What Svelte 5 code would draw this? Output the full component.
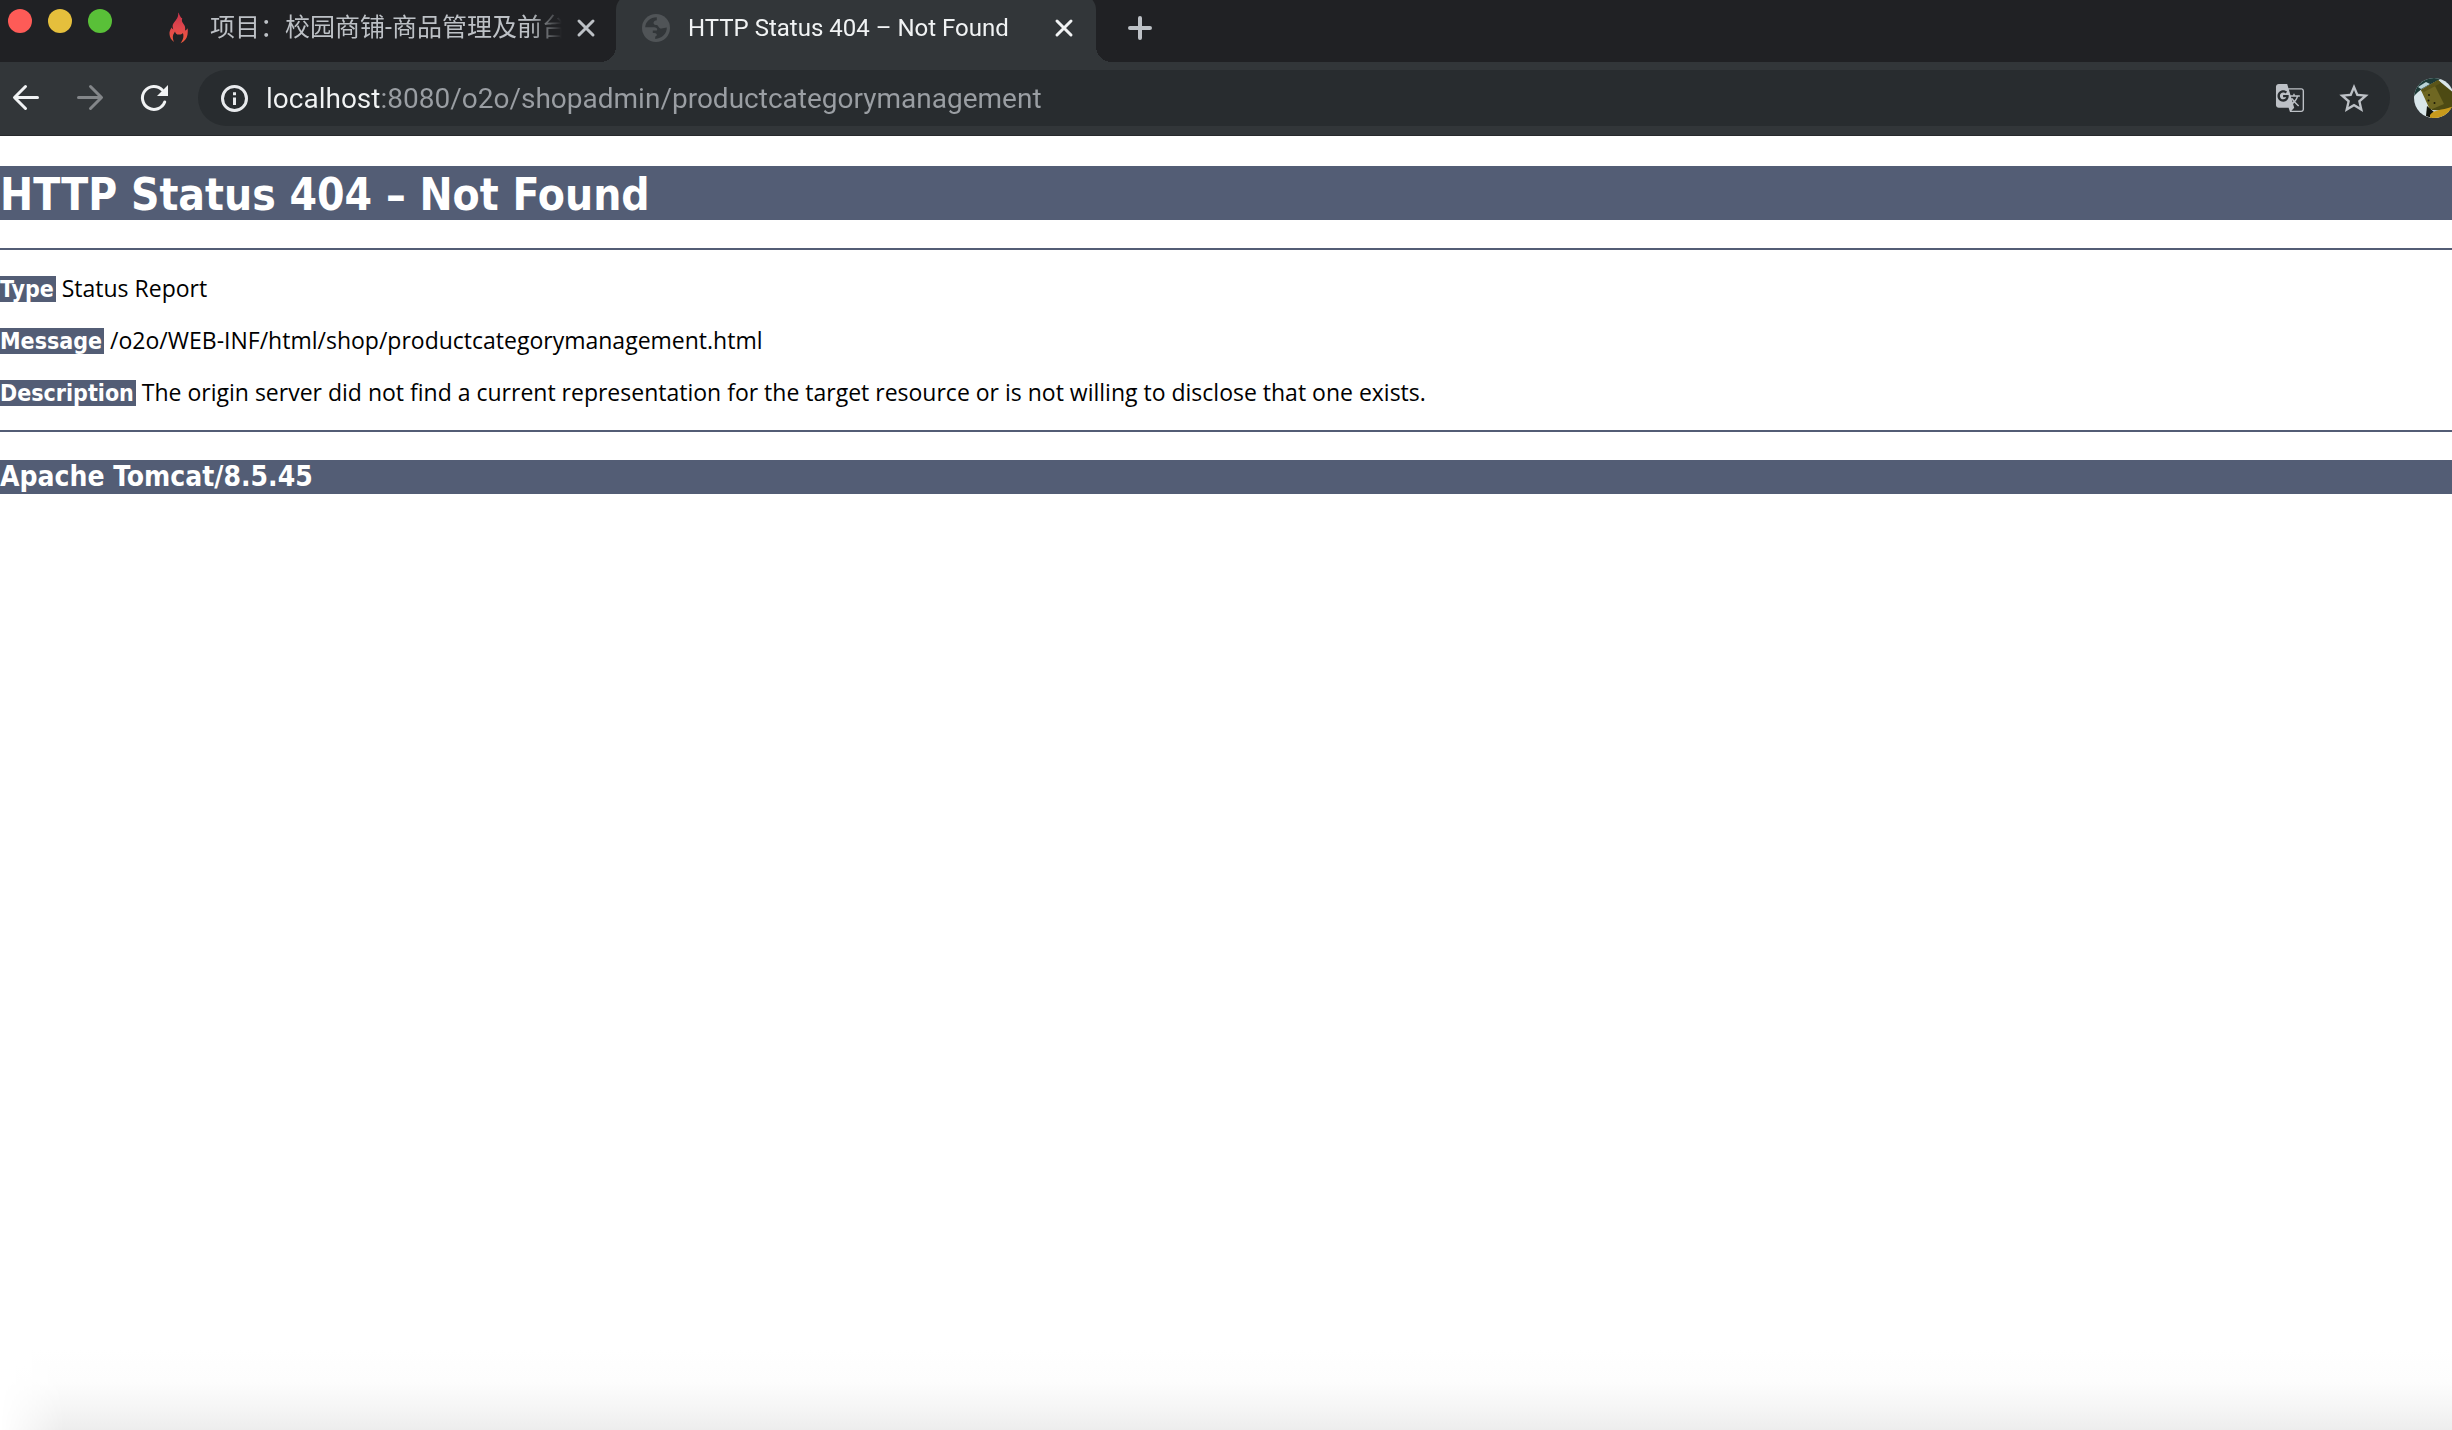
<script lang="ts">
	// Browser window showing Tomcat's default 404 report

	interface Tab {
		id: string;
		title: string;
		icon: 'flame' | 'globe';
		active: boolean;
	}

	interface ReportLine {
		label: string;
		value: string;
	}

	const tabs: Tab[] = [
		{ id: 'course', title: '项目：校园商铺-商品管理及前台', icon: 'flame', active: false },
		{ id: 'report', title: 'HTTP Status 404 – Not Found', icon: 'globe', active: true }
	];

	const lines: ReportLine[] = [
		{ label: 'Type', value: 'Status Report' },
		{ label: 'Message', value: '/o2o/WEB-INF/html/shop/productcategorymanagement.html' },
		{
			label: 'Description',
			value:
				'The origin server did not find a current representation for the target resource or is not willing to disclose that one exists.'
		}
	];

	let url = $state('localhost:8080/o2o/shopadmin/productcategorymanagement');
</script>

<div class="window">
	<header class="chrome">
		<div class="tab-strip">
			<div class="window-controls">
				<button type="button" class="light close-window" aria-label="Close window"></button>
				<button type="button" class="light minimize" aria-label="Minimize"></button>
				<button type="button" class="light zoom" aria-label="Zoom"></button>
			</div>

			{#each tabs as tab (tab.id)}
				<div class="tab" class:active={tab.active}>
					{#if tab.icon === 'flame'}
						<svg class="favicon" viewBox="0 0 32 32" aria-hidden="true">
							<defs>
								<linearGradient id="flame" x1="0" y1="0" x2="0" y2="1">
									<stop offset="0" stop-color="#c9344b" />
									<stop offset="0.5" stop-color="#e0474c" />
									<stop offset="1" stop-color="#ee5a3c" />
								</linearGradient>
							</defs>
							<path
								fill="url(#flame)"
								d="M16 .6c.6 2.600 0 5-2.200 7.600-2 2.400-3.400 4.200-3.200 6.400.1 1.200.5 2 .7 3-.8-.4-1.300-1.200-1.500-2.200-1.700 2-2.500 4.200-2.300 6.600.2 3 1.600 6 4.600 8-1.300-2.600-1.700-5.200-.8-7.600.5-1.200 1.200-2 1.700-3 .4 2 1.700 3 3.600 3.200 1.900.1 3.400-.3 4.300-1.500.7 2 .7 4.200-.1 6.200-.5 1.400-1.300 2.700-2.300 4 4-1.800 6.300-4.800 7-8.600.4-2.400.4-4.600.1-6.400-.7 1.200-1.500 1.900-2.600 2.200.5-2.600 0-4.400-1.300-6.200-1.500-2-2.300-3.400-1.500-6C18.300 6.100 17.900 2.600 16 .6z"
							/>
						</svg>
					{:else}
						<svg class="favicon" viewBox="0 0 32 32" aria-hidden="true">
							<circle cx="16" cy="16" r="14" fill="#505457" />
							<path
								fill="#323639"
								d="M5.200 15.200C5.600 9.800 10 5.400 16.800 5.300V8.200c-1.800.2-3.300 1.200-3.300 2.800 0 1.800 2 2 3.200 2.100 1.700.1 1.500 2.700 3.600 3.300 2.300.6 4-.6 6.500-.8C27 21.600 22 26.800 15.200 26.900v-2.500c1.200-.4 1.700-1 1.600-2-.1-1.400-2-1.500-4-1.500v-2.300h3.800c.8 0 .8-1.700.1-2.400-.8-.8-2-.9-3.500-.9z"
							/>
						</svg>
					{/if}
					<span class="title">{tab.title}</span>
					<button type="button" class="icon-button" aria-label="Close tab">
						<svg viewBox="0 0 32 32" aria-hidden="true">
							<path d="M9 9l14 14M23 9L9 23" stroke="currentColor" stroke-width="3" stroke-linecap="round" />
						</svg>
					</button>
				</div>
			{/each}

			<button type="button" class="icon-button new-tab" aria-label="New tab">
				<svg viewBox="0 0 32 32" aria-hidden="true">
					<path d="M16 6v20M6 16h20" stroke="currentColor" stroke-width="4" stroke-linecap="round" />
				</svg>
			</button>
		</div>

		<div class="toolbar">
			<nav class="history" aria-label="History">
				<button type="button" class="nav-button" aria-label="Back">
					<svg viewBox="0 0 40 40" aria-hidden="true">
						<path d="M31.500 19.500H9M19.500 8.500L8.500 19.500l11 11" />
					</svg>
				</button>
				<button type="button" class="nav-button" aria-label="Forward" disabled>
					<svg viewBox="0 0 40 40" aria-hidden="true">
						<path d="M8.500 19.500H31M20.500 8.500l11 11-11 11" />
					</svg>
				</button>
				<button type="button" class="nav-button" aria-label="Reload">
					<svg viewBox="0 0 40 40" aria-hidden="true">
						<path d="M28.300 12A11.500 11.500 0 1 0 30.700 24" />
						<path class="solid" d="M34 7v11H23z" />
					</svg>
				</button>
			</nav>

			<div class="omnibox">
				<button type="button" class="icon-button info" aria-label="View site information">
					<svg viewBox="0 0 32 32" aria-hidden="true">
						<circle cx="16.500" cy="16.500" r="12" fill="none" stroke="currentColor" stroke-width="3" />
						<path d="M15 10.200h3v3h-3zM15 15.500h3v7.500h-3z" fill="currentColor" />
					</svg>
				</button>
				<input class="url" type="text" aria-label="Address" spellcheck="false" bind:value={url} />
				<button type="button" class="icon-button" aria-label="Translate this page">
					<svg viewBox="0.6 0.6 22.8 22.8" aria-hidden="true">
						<path
							fill="currentColor"
							d="M20 5h-9.120L10 2H4c-1.100 0-2 .9-2 2v13c0 1.100.9 2 2 2h7l1 3h8c1.100 0 2-.9 2-2V7c0-1.100-.9-2-2-2zM7.170 14.590c-2.250 0-4.090-1.830-4.090-4.090s1.830-4.090 4.090-4.090c1.040 0 1.990.37 2.740 1.070l.07.06-1.230 1.180-.06-.05c-.29-.27-.78-.59-1.520-.59-1.310 0-2.380 1.090-2.380 2.420s1.070 2.420 2.380 2.420c1.370 0 1.960-.87 2.120-1.460H7.080V9.910h3.950l.01.07c.04.21.05.4.05.61 0 2.350-1.610 4-3.920 4zm6.030-1.710c.33.6.74 1.180 1.190 1.700l-.54.53-.65-2.230zm.77-.76h-.99l-.31-1.040h3.990s-.34 1.310-1.560 2.740c-.52-.62-.89-1.230-1.130-1.700zM21 20c0 .55-.45 1-1 1h-7l2-2-.81-2.770.92-.92L17.790 18l.73-.73-2.710-2.680c.9-1.030 1.600-2.250 1.920-3.510H19v-1.040h-3.640V9h-1.040v1.040h-1.960L11.180 6H20c.55 0 1 .45 1 1v13z"
						/>
					</svg>
				</button>
				<button type="button" class="icon-button" aria-label="Bookmark this page">
					<svg viewBox="1.1 0.6 21.8 21.8" aria-hidden="true">
						<path
							fill="currentColor"
							d="M22 9.240l-7.190-.62L12 2 9.190 8.630 2 9.240l5.460 4.730L5.820 21 12 17.270 18.180 21l-1.630-7.030L22 9.240zM12 15.400l-3.760 2.270 1-4.280-3.320-2.880 4.380-.38L12 6.100l1.710 4.040 4.380.38-3.320 2.880 1 4.280L12 15.400z"
						/>
					</svg>
				</button>
			</div>

			<button type="button" class="avatar" aria-label="Profile">
				<svg viewBox="0 0 40 40" aria-hidden="true">
					<rect width="40" height="40" fill="#d9e6ea" />
					<path d="M0 0h28L8 11 4 14 0 18z" fill="#1d3a37" />
					<path d="M4 9l8-5 4 2-9 5z" fill="#b9d3d6" />
					<path d="M7 12l17-10 16 13v18l-22-1z" fill="#4d4a13" />
					<path d="M7 12l14-4 9 18-14 6z" fill="#6f6722" />
					<path d="M7 12l17-10 3 3-17 9z" fill="#5b5518" />
					<path d="M13 28l7 6-2 6-6-2z" fill="#10130c" />
					<path d="M16 37c4-6 12-4 24-9v12H16z" fill="#c89a1c" />
					<circle cx="15" cy="17" r="1" fill="#1d1b08" />
					<circle cx="14.500" cy="22.500" r="1" fill="#1d1b08" />
					<circle cx="20.500" cy="25" r="1" fill="#1d1b08" />
				</svg>
			</button>
		</div>
	</header>

	<main class="report">
		<h1>HTTP Status 404 – Not Found</h1>
		<hr />
		{#each lines as line (line.label)}
			<p><b>{line.label}</b> {line.value}</p>
		{/each}
		<hr />
		<h3>Apache Tomcat/8.5.45</h3>
	</main>

	<div class="shade"></div>
</div>

<style>
	:global(body) {
		background: #fff;
	}

	.window {
		display: flex;
		flex-direction: column;
		min-height: 100vh;
		overflow: hidden;
		font-family: Roboto, 'Noto Sans CJK SC', sans-serif;
	}

	button {
		padding: 0;
		border: 0;
		background: none;
		color: inherit;
		flex-shrink: 0;
	}

	svg {
		display: block;
		width: 100%;
		height: 100%;
	}

	/* Tab strip */
	.tab-strip {
		display: flex;
		align-items: flex-end;
		height: 62px;
		overflow: hidden;
		background: #202124;
		color: #bdc1c6;
	}

	.window-controls {
		display: flex;
		align-self: flex-start;
		gap: 16px;
		padding: 9px 24px 0 8px;
	}

	.light {
		width: 24px;
		height: 24px;
		border-radius: 50%;
	}

	.close-window {
		background: #fe5b57;
	}

	.minimize {
		background: #e5bf3c;
	}

	.zoom {
		background: #59c038;
	}

	.tab {
		position: relative;
		display: flex;
		align-items: center;
		flex: 0 1 480px;
		box-sizing: border-box;
		min-width: 0;
		height: 68px;
		padding: 0 14px 0 26px;
		font-size: 25px;
	}

	.tab.active {
		padding: 0 16px 0 24px;
		border-radius: 16px 16px 0 0;
		background: #323639;
		color: #f1f3f4;
		font-size: 24px;
	}

	/* Flared feet of the selected tab */
	.tab.active::before,
	.tab.active::after {
		content: '';
		position: absolute;
		bottom: 0;
		width: 16px;
		height: 16px;
	}

	.tab.active::before {
		right: 100%;
		background: radial-gradient(circle at 0 0, transparent 16px, #323639 16px);
	}

	.tab.active::after {
		left: 100%;
		background: radial-gradient(circle at 100% 0, transparent 16px, #323639 16px);
	}

	.favicon {
		width: 32px;
		height: 32px;
		flex-shrink: 0;
	}

	.title {
		flex: 1;
		min-width: 0;
		margin: 0 8px 0 16px;
		overflow: hidden;
		line-height: 32px;
		white-space: nowrap;
		mask-image: linear-gradient(to left, transparent, #000 32px);
	}

	.icon-button {
		width: 32px;
		height: 32px;
	}

	.new-tab {
		margin: 0 0 18px 28px;
	}

	/* Toolbar */
	.toolbar {
		display: flex;
		align-items: center;
		gap: 24px;
		padding: 8px 0 9px 6px;
		border-bottom: 1px solid #27292c;
		background: #323639;
		color: #f1f3f4;
	}

	.history {
		display: flex;
		gap: 24px;
	}

	.nav-button {
		width: 40px;
		height: 40px;
	}

	.nav-button:disabled {
		color: #838689;
	}

	.nav-button path {
		fill: none;
		stroke: currentColor;
		stroke-width: 3;
		stroke-linecap: round;
		stroke-linejoin: round;
	}

	.nav-button .solid {
		fill: currentColor;
		stroke: none;
	}

	.omnibox {
		display: flex;
		align-items: center;
		flex: 1;
		gap: 32px;
		min-width: 0;
		height: 56px;
		box-sizing: border-box;
		padding: 0 20px;
		border-radius: 28px;
		background: #282c2f;
		color: #bdc1c6;
	}

	.info {
		margin-right: -16px;
		color: #e8eaed;
	}

	/* The host name is brighter than the rest of the address */
	.url {
		flex: 1;
		min-width: 0;
		height: 40px;
		padding: 0;
		border: 0;
		outline: 0;
		background: linear-gradient(to right, #f1f3f4 114px, #9a9ea3 114px);
		background-clip: text;
		color: transparent;
		caret-color: #f1f3f4;
		font: 28px Roboto, sans-serif;
	}

	.avatar {
		width: 40px;
		height: 40px;
		margin-right: -2px;
		border-radius: 50%;
		overflow: hidden;
	}

	/* Error report */
	.report {
		flex: 1;
		padding-top: 30px;
		color: #000;
		font-family: 'Open Sans', sans-serif;
	}

	h1,
	h3,
	b {
		background: #535d75;
		color: #fff;
		font-family: 'DejaVu Sans Condensed', sans-serif;
		font-weight: bold;
	}

	h1 {
		margin: 0;
		padding-top: 4px;
		font-size: 44px;
		line-height: 50px;
	}

	h3 {
		margin: 0;
		font-size: 28px;
		line-height: 34px;
	}

	hr {
		height: 2px;
		margin: 28px 0 24px;
		border: 0;
		background: #535d75;
	}

	p {
		margin: 0 0 24px;
		font-size: 23px;
		line-height: 28px;
	}

	p + hr {
		margin: 24px 0 28px;
	}

	b {
		padding-right: 2px;
		line-height: 1;
	}

	.shade {
		height: 80px;
		background: linear-gradient(to bottom, #fff, #fdfdfd 40%, #f6f6f6 70%, #ededed);
		mask-image: linear-gradient(to right, transparent, #000 64px);
	}
</style>
